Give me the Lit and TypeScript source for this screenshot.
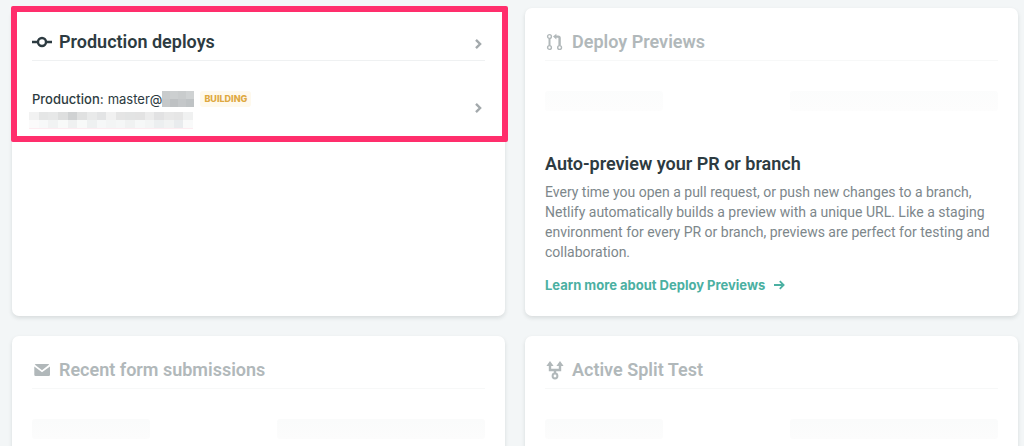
import { LitElement, html, css, svg } from "lit";
import { customElement, property } from "lit/decorators.js";

const icons = {
  commit: svg`<svg viewBox="0 0 20 20" width="20" height="20" fill="none" stroke="currentColor" stroke-width="2.4"><circle cx="10" cy="10" r="4"/><path d="M0 10h6M14 10h6"/></svg>`,
  pull: svg`<svg viewBox="0 0 20 20" width="20" height="20" fill="none" stroke="currentColor" stroke-width="1.4"><circle cx="4.5" cy="4.5" r="1.9"/><circle cx="4.5" cy="15.5" r="1.9"/><circle cx="14.6" cy="15.5" r="1.9"/><path d="M4.5 6.4v7.2" stroke-width="2"/><path d="M10 4.6h3.2q1.4 0 1.4 1.4v7.6" stroke-width="2.4"/><path d="M11.4 1.8v5.6L8 4.6z" fill="currentColor" stroke="none"/></svg>`,
  mail: svg`<svg viewBox="0 0 20 20" width="20" height="20" fill="currentColor"><path d="M3.8 4h12.4q.7 0 1 .5L10 10.3 2.7 4.5q.4-.5 1.1-.5z"/><path d="M2.3 6.6 10 12.3l8-5.7v8.2q0 1.2-1.2 1.2H3.5q-1.2 0-1.2-1.2z"/></svg>`,
  split: svg`<svg viewBox="0 0 20 20" width="20" height="20" fill="none" stroke="currentColor" stroke-width="2.4"><path d="M5 5v5h10V5M10 10v3.6"/><circle cx="10" cy="16" r="2.4" stroke-width="2"/><path d="M5 1 8.6 6H1.4zM15 1l3.6 5h-7.2z" fill="currentColor" stroke="none"/></svg>`,
};

const chevron = svg`<svg viewBox="0 0 8 12" width="8" height="12" fill="none" stroke="currentColor" stroke-width="2.4"><path d="M2 1.9 6.1 6 2 10.1"/></svg>`;

@customElement("dash-card")
class DashCard extends LitElement {
  @property() heading = "";
  @property() icon: keyof typeof icons = "commit";
  @property({ type: Boolean, reflect: true }) active = false;

  static styles = css`
    :host {
      display: block;
      box-sizing: border-box;
      position: relative;
      min-height: 308px;
      padding: 20px;
      border-radius: 7px;
      background: #fff;
      box-shadow: 0 2px 4px rgba(14, 30, 37, 0.12);
    }
    header {
      display: flex;
      align-items: center;
      gap: 7px;
      height: 32px;
      border-bottom: 1px solid #f7f8f8;
      color: #b1b8ba;
    }
    :host([active]) header {
      border-color: #eff1f2;
      color: #2d3b41;
    }
    svg {
      display: block;
    }
    .icon {
      margin-bottom: 4px;
    }
    h2 {
      flex: 1;
      margin: 0 0 4px;
      font: 600 18px/24px Roboto, sans-serif;
    }
    a {
      padding: 0 3px;
      color: #a3a9ac;
    }
  `;

  render() {
    return html`
      <header>
        <span class="icon">${icons[this.icon]}</span>
        <h2>${this.heading}</h2>
        ${this.active
          ? html`<a href="#deploys" aria-label="View production deploys">${chevron}</a>`
          : null}
      </header>
      <slot></slot>
    `;
  }
}

@customElement("empty-row")
class EmptyRow extends LitElement {
  static styles = css`
    :host {
      display: flex;
      justify-content: space-between;
      margin-top: 30px;
    }
    :host([faded]) {
      opacity: 0.7;
    }
    span {
      height: 20px;
      border-radius: 3px;
      background: linear-gradient(#fafbfb, #fcfcfc);
    }
    .short {
      width: 26%;
    }
    .long {
      width: 46%;
    }
  `;
  render() {
    return html`<span class="short"></span><span class="long"></span>`;
  }
}

const hash = ["#c8cbcc", "#cccfd0", "#c9cccd", "#cfd2d3", "#c5c8c9", "#bec1c3", "#c4c7c9", "#bfc3c5"];
const lineOne = ["#f2f2f2", "#e5e6e6", "#e7e8e8", "#dedfdf", "#d0d2d3", "#e0e1e1", "#e9eaea", "#e3e4e5", "#f1f1f1", "#e5e5e5", "#e3e4e4", "#e3e3e3", "#ececec", "#e2e2e3", "#e8e8e8", "#e6e6e6", "#f0f1f1"];
const lineTwo = ["#fbfbfb", "#f7f9f9", "#f1f3f3", "#f8faf9", "#eff1f1", "#f8faf9", "#eef1f1", "#f6f8f8", "#f3f5f5", "#f5f7f7", "#f0f2f2", "#f6f8f8", "#f3f5f5", "#eceff0", "#f1f3f3", "#e9ecee", "#f9fafa"];

@customElement("app-root")
class AppRoot extends LitElement {
  static styles = css`
    :host {
      display: block;
      box-sizing: border-box;
      height: 100vh;
      overflow: hidden;
      padding: 8px 6px 0 12px;
      background: #f3f6f7;
      color: #2d3b41;
      font: 13px/20px Inter, sans-serif;
    }
    main {
      display: grid;
      grid-template-columns: 1fr 1fr;
      gap: 20px;
    }
    .highlight {
      position: absolute;
      inset: -2px -3px auto -1px;
      height: 124px;
      border: 6px solid #ff2e6c;
      border-radius: 2px;
      pointer-events: none;
    }
    .deploy {
      display: flex;
      align-items: center;
      justify-content: space-between;
      margin-top: 28px;
      padding-right: 3px;
      color: #a3a9ac;
      text-decoration: none;
    }
    .deploy svg {
      display: block;
      margin-bottom: 3px;
    }
    .line {
      display: flex;
      align-items: center;
      color: #2d3b41;
    }
    .line b {
      font-weight: 500;
      margin-right: 4px;
    }
    .pixels {
      display: grid;
      grid-auto-rows: 8px;
    }
    .hash {
      width: 32px;
      grid-template-columns: repeat(4, 1fr);
    }
    .badge {
      margin-left: 6px;
      padding: 0 4px;
      border-radius: 3px;
      background: #fef9ed;
      color: #dfa941;
      font: 800 9px/16px Inter, sans-serif;
    }
    .message {
      width: 164px;
      margin: 3px 0 0 -3px;
      grid-template-columns: repeat(17, 1fr);
      border-bottom: 1px solid #fdecf1;
    }
    h3 {
      margin: 41px 0 0;
      font: 600 18px/24px Roboto, sans-serif;
    }
    p {
      margin: 6px 0 0;
      color: #7d878b;
      font: 14px/20px Roboto, sans-serif;
    }
    .learn {
      display: flex;
      align-items: center;
      gap: 8px;
      margin-top: 13px;
      color: #4bb0a2;
      font-weight: 700;
      text-decoration: none;
    }
  `;

  render() {
    const cell = (c: string) => html`<i style="background:${c}"></i>`;
    return html`
      <main>
        <dash-card heading="Production deploys" icon="commit" active>
          <a class="deploy" href="#master">
            <span>
              <span class="line">
                <b>Production:</b> master@
                <span class="pixels hash">${hash.map(cell)}</span>
                <span class="badge">BUILDING</span>
              </span>
              <span class="pixels message">${[...lineOne, ...lineTwo].map(cell)}</span>
            </span>
            ${chevron}
          </a>
          <div class="highlight"></div>
        </dash-card>
        <dash-card heading="Deploy Previews" icon="pull">
          <empty-row faded></empty-row>
          <h3>Auto-preview your PR or branch</h3>
          <p>
            Every time you open a pull request, or push new changes to a branch, Netlify
            automatically builds a preview with a unique URL. Like a staging environment for every
            PR or branch, previews are perfect for testing and collaboration.
          </p>
          <a class="learn" href="#previews">
            Learn more about Deploy Previews
            <svg viewBox="0 0 12 12" width="12" height="12" fill="none" stroke="currentColor" stroke-width="1.8"><path d="M1 6h9.5M6.8 2.2 10.6 6 6.8 9.8"/></svg>
          </a>
        </dash-card>
        <dash-card heading="Recent form submissions" icon="mail">
          <empty-row></empty-row>
        </dash-card>
        <dash-card heading="Active Split Test" icon="split">
          <empty-row></empty-row>
        </dash-card>
      </main>
    `;
  }
}
